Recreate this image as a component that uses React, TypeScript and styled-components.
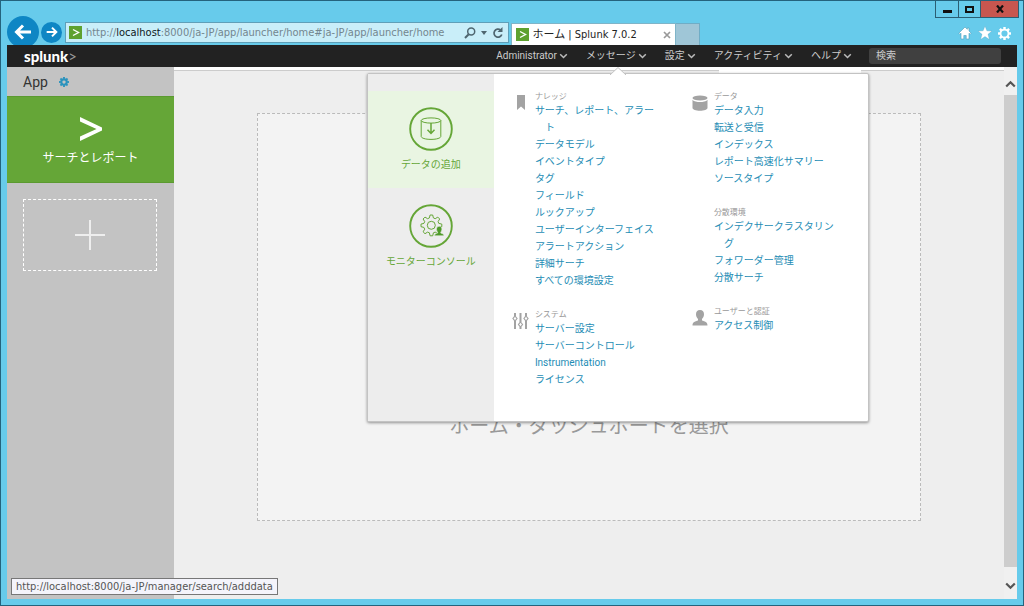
import React from "react";
import styled, { createGlobalStyle, css } from "styled-components";

const jp = `Roboto, "Noto Sans CJK JP", sans-serif`;
const ui = `"DejaVu Sans Condensed", "Noto Sans CJK JP", sans-serif`;

const Global = createGlobalStyle`
  * { box-sizing: border-box; }
  body { margin: 0; background: #67cbeb; font-family: ${jp}; font-size: 10px; }
  button { border: 0; padding: 0; margin: 0; background: none; font: inherit; color: inherit; cursor: pointer; }
  a { text-decoration: none; color: inherit; }
  ul, h2, h3, p { margin: 0; padding: 0; list-style: none; font-weight: 400; font-size: inherit; }
  svg { display: block; flex: none; }
`;

/* ---------- browser window ---------- */

const Window = styled.div`
  position: relative;
  display: flex;
  flex-direction: column;
  min-height: 100vh;
  padding: 0 6px 6px;
  border: 1px solid #24637d;
  background: #67cbeb;
`;

const Chrome = styled.header`
  display: flex;
  align-items: flex-end;
  height: 44px;
  font-family: ${ui};
`;

const HistoryButtons = styled.div`
  display: flex;
  align-items: center;
  gap: 2px;
  width: 58px;
  height: 26px;
`;

const RoundButton = styled.button<{ $size: number }>`
  display: grid;
  place-items: center;
  width: ${(p) => p.$size}px;
  height: ${(p) => p.$size}px;
  border-radius: 50%;
  background: #0e86c4;
  flex: none;
`;

const AddressBar = styled.form`
  display: flex;
  align-items: center;
  flex: 1 1 444px;
  min-width: 0;
  height: 21px;
  margin-bottom: 2px;
  padding: 0 4px 0 3px;
  gap: 4px;
  border: 1px solid #5f9fb8;
  background: #c9eef9;
`;

const Url = styled.div`
  flex: 1;
  min-width: 0;
  overflow: hidden;
  white-space: nowrap;
  font-size: 11px;
  line-height: 16px;
  color: #74868f;
  b { font-weight: 400; color: #10181c; }
`;

const BarTools = styled.div`
  display: flex;
  align-items: center;
  gap: 5px;
  color: #4f6670;
`;

const Tab = styled.div`
  display: flex;
  align-items: center;
  gap: 4px;
  width: 166px;
  height: 22px;
  margin-left: 2px;
  padding: 0 4px;
  border: 1px solid #7fb4c8;
  border-bottom: 0;
  background: #fff;
  color: #222;
  font-size: 11px;
  line-height: 16px;
  span { flex: 1; white-space: nowrap; }
`;

const NewTab = styled.button`
  width: 24px;
  height: 22px;
  border: 1px solid #6fadc6;
  border-left: 0;
  border-bottom: 0;
  background: #9fc6d7;
`;

const ChromeRight = styled.div`
  display: flex;
  flex-direction: column;
  align-items: flex-end;
  justify-content: space-between;
  flex: 1 1 317px;
  height: 44px;
`;

const WindowButtons = styled.div`
  display: flex;
  height: 17px;
  margin-right: -2px;
  border: 1px solid #2b5e73;
  border-top: 0;
`;

const WindowButton = styled.button<{ $close?: boolean }>`
  display: grid;
  place-items: center;
  width: ${(p) => (p.$close ? 38 : 22)}px;
  background: ${(p) => (p.$close ? "#c7564f" : "transparent")};
  & + & { border-left: 1px solid #2b5e73; }
`;

const Shortcuts = styled.div`
  display: flex;
  gap: 6px;
  padding: 0 6px 5px;
`;

/* ---------- product bar ---------- */

const Bar = styled.nav`
  display: flex;
  align-items: center;
  height: 22px;
  padding: 0 16px 0 17px;
  background: #222;
  color: #ccc;
  line-height: 16px;
`;

const Logo = styled.a`
  margin-right: auto;
  font-family: Lato, sans-serif;
  font-size: 15px;
  font-weight: 900;
  line-height: 20px;
  color: #fff;
  span { color: #999; font-weight: 400; }
`;

const BarItems = styled.ul`
  display: flex;
  gap: 18px;
  margin-right: 17px;
`;

const BarItem = styled.li`
  position: relative;
`;

const BarButton = styled.button`
  display: flex;
  align-items: center;
  gap: 2px;
  white-space: nowrap;
  line-height: 20px;
`;

const Search = styled.input`
  width: 132px;
  height: 16px;
  padding: 0 7px;
  border: 0;
  border-radius: 3px;
  background: #404040;
  color: #ccc;
  font: 10px/16px ${jp};
  &::placeholder { color: #ccc; opacity: 1; }
`;

/* ---------- settings menu ---------- */

const Menu = styled.div`
  position: absolute;
  z-index: 2;
  top: 27px;
  left: -219px;
  display: flex;
  width: 502px;
  min-height: 349px;
  border: 1px solid #c3c3c3;
  border-radius: 2px;
  background: #fff;
  box-shadow: 0 1px 3px rgba(0, 0, 0, 0.4);
`;

const Caret = styled.svg`
  position: absolute;
  top: -7px;
  left: 242px;
`;

const Featured = styled.div`
  width: 126px;
  padding-top: 17px;
  background: #ededed;
`;

const FeaturedLink = styled.a<{ $active?: boolean }>`
  display: flex;
  flex-direction: column;
  align-items: center;
  gap: 6px;
  padding: 16px 0 15px;
  color: #65a637;
  line-height: 16px;
  ${(p) => p.$active && css`background: #e9f5e2;`}
`;

const Columns = styled.div`
  display: flex;
  gap: 28px;
  padding: 15px 0 24px 18px;
`;

const Column = styled.div`
  display: flex;
  flex-direction: column;
  gap: 18px;
  width: 151px;
`;

const Group = styled.section`
  display: grid;
  grid-template-columns: 18px 1fr;
  column-gap: 5px;
  h3 {
    grid-column: 2;
    font-size: 8px;
    line-height: 16px;
    color: #999;
    margin-bottom: -3px;
  }
`;

const GroupIcon = styled.span`
  grid-column: 1;
  grid-row: 1 / 3;
  padding-top: 6px;
  color: #a3a3a3;
  display: flex;
  justify-content: center;
  align-items: flex-start;
`;

const Links = styled.ul`
  grid-column: 2;
  color: #1e8db5;
  line-height: 17px;
`;

const LinkRow = styled.li`
  padding-left: 10px;
  text-indent: -10px;
`;

/* ---------- page ---------- */

const Page = styled.div`
  display: flex;
  flex: 1;
  background: #fff;
`;

const Sidebar = styled.aside`
  width: 167px;
  background: #c3c3c3;
`;

const AppHeader = styled.div`
  display: flex;
  align-items: center;
  gap: 11px;
  height: 29px;
  padding-left: 16px;
  color: #333;
  h2 { font-size: 14px; line-height: 20px; }
`;

const AppTile = styled.a`
  display: flex;
  flex-direction: column;
  align-items: center;
  gap: 7px;
  height: 87px;
  padding-top: 20px;
  border-top: 1px solid #5b9a30;
  border-bottom: 1px solid #5b9a30;
  background: #65a637;
  color: #fff;
  font-size: 12px;
  line-height: 20px;
`;

const AddApp = styled.button`
  display: grid;
  place-items: center;
  width: 134px;
  height: 72px;
  margin: 16px 16px 0;
  border: 1px dashed #fff;
`;

const Main = styled.main`
  display: flex;
  flex-direction: column;
  flex: 1;
  padding-top: 3px;
  background: #fff;
`;

const TopEdge = styled.div`
  display: flex;
  height: 4px;
`;

const EdgeLine = styled.div<{ $grow: number }>`
  flex: ${(p) => p.$grow};
  border-top: 1px solid #ccc;
  background: #eee;
`;

const EdgeTab = styled.div`
  width: 142px;
`;

const Content = styled.div`
  flex: 1;
  padding: 39px 10% 78px;
  background: #eee;
`;

const Dashboard = styled.section`
  display: flex;
  flex-direction: column;
  justify-content: flex-end;
  align-items: center;
  min-height: 408px;
  padding-bottom: 79px;
  border: 1px dashed #bbb;
  background: #f3f3f3;
  color: #999;
  p { font-size: 20px; line-height: 30px; }
`;

const Scrollbar = styled.div`
  display: flex;
  flex-direction: column;
  width: 13px;
  background: #f0f0f0;
`;

const ScrollButton = styled.button<{ $h: number }>`
  display: grid;
  justify-items: center;
  align-items: center;
  height: ${(p) => p.$h}px;
  padding-top: 6px;
`;

const Thumb = styled.div`
  flex: 1;
  background: #cdcdcd;
`;

const StatusTip = styled.div`
  position: absolute;
  z-index: 3;
  left: 10px;
  bottom: 10px;
  padding: 0 4px;
  border: 1px solid #777;
  background: #f4f4fb;
  color: #555;
  font: 11px/15px ${ui};
`;

/* ---------- icons ---------- */

const SiteIcon = () => (
  <svg width="13" height="13" viewBox="0 0 13 13">
    <rect width="13" height="13" fill="#5ea12f" />
    <path d="M4 3.5 9.5 6.5 4 9.5" fill="none" stroke="#fff" strokeWidth="1.4" />
  </svg>
);

const Arrow = ({ size, flip }: { size: number; flip?: boolean }) => (
  <svg width={size} height={size} viewBox="0 0 18 18">
    <path
      d={flip ? "M1 9h14M9 2.5 15.5 9 9 15.5" : "M17 9H3M9 2.5 2.5 9 9 15.5"}
      fill="none"
      stroke="#fff"
      strokeWidth="3"
    />
  </svg>
);

const Chevron = () => (
  <svg width="9" height="6" viewBox="0 0 9 6">
    <path d="M1.2 1.2 4.5 4.5 7.8 1.2" fill="none" stroke="#bbb" strokeWidth="1.5" />
  </svg>
);

const teeth = [0, 45, 90, 135, 180, 225, 270, 315];

const Gear = ({ size, color, hole }: { size: number; color: string; hole: number }) => (
  <svg width={size} height={size} viewBox="-8 -8 16 16">
    <circle r={(6 + hole) / 2} fill="none" stroke={color} strokeWidth={6 - hole} />
    {teeth.map((a) => (
      <rect key={a} x="-1.5" y="-8" width="3" height="3" fill={color} transform={`rotate(${a})`} />
    ))}
  </svg>
);

const gearOutline =
  "M20.4 13.9l.7-2.9h2.6l.7 2.9 1.8.8 2.6-1.6 1.9 1.9-1.6 2.6.7 1.8 3 .7v2.6l-3 .7-.7 1.8 1.6 2.6-1.9 1.9-2.6-1.6-1.8.7-.7 3h-2.6l-.7-3-1.8-.7-2.6 1.6-1.9-1.9 1.6-2.6-.8-1.8-2.9-.7v-2.6l2.9-.7.8-1.8-1.6-2.6 1.9-1.9 2.6 1.6z";

const AddDataIcon = () => (
  <svg width="44" height="44" viewBox="0 0 44 44" fill="none" stroke="#65a637">
    <circle cx="22" cy="22" r="20.8" strokeWidth="1.9" />
    <ellipse cx="22" cy="13.5" rx="9.8" ry="2.6" />
    <path d="M12.2 13.5V29.500c0 1.500 4 2.900 9.800 2.900s9.800-1.400 9.800-2.900V13.500" />
    <path d="M22 16v10M18.500 22.800 22 26.400l3.500-3.600" strokeWidth="1.500" />
  </svg>
);

const MonitorIcon = () => (
  <svg width="44" height="44" viewBox="0 0 44 44" fill="none" stroke="#65a637">
    <circle cx="22" cy="22" r="20.8" strokeWidth="1.9" />
    <path d={gearOutline} strokeLinejoin="round" />
    <circle cx="22.300" cy="21.300" r="4" />
    <path
      d="M30.200 22.300c1.900 0 2.700 1.300 2.700 2.900 0 1.500-.6 2.300-1.100 3v.9c1.700.5 3.200 1 3.200 2.700H25.400c0-1.700 1.500-2.200 3.200-2.700v-.9c-.5-.7-1.100-1.500-1.100-3 0-1.600.8-2.900 2.700-2.900z"
      fill="#4f9a2a"
      stroke="#e9efe5"
      strokeWidth=".6"
    />
  </svg>
);

const Bookmark = () => (
  <svg width="8" height="15" viewBox="0 0 8 15">
    <path d="M0 0h8v15L4 11.500 0 15z" fill="currentColor" />
  </svg>
);

const Cylinder = () => (
  <svg width="16" height="16" viewBox="0 0 16 16" fill="currentColor">
    <ellipse cx="8" cy="3" rx="7.500" ry="2.600" />
    <path d="M.5 4.800C2 6.800 5 7 8 7s6-.2 7.500-2.200V13c0 1.600-3.400 2.800-7.500 2.800S.5 14.600.5 13z" />
  </svg>
);

const Sliders = () => (
  <svg width="17" height="17" viewBox="0 0 17 17" fill="none" stroke="currentColor" strokeWidth="2">
    <path d="M3 0v3M3 8v8M8.500 0v9M8.500 14v2M14 0v3M14 8v8" />
    <path d="M3 3 5 5.500 3 8 1 5.500zM8.500 9l2 2.500-2 2.500-2-2.500zM14 3l2 2.500L14 8l-2-2.500z" strokeWidth="1.200" />
  </svg>
);

const Person = () => (
  <svg width="16" height="16" viewBox="0 0 16 16" fill="currentColor">
    <path d="M8 0c2.800 0 4 1.900 4 4.300 0 2-.9 3.600-2 4.600v1.600c2.700.9 5.500 1.500 5.500 4.900H.5c0-3.400 2.800-4 5.500-4.900V8.900c-1.100-1-2-2.600-2-4.600C4 1.900 5.200 0 8 0z" />
  </svg>
);

const ScrollArrow = ({ down }: { down?: boolean }) => (
  <svg width="11" height="8" viewBox="0 0 11 8">
    <path d={down ? "M1.200 1.500 5.500 5.800 9.800 1.500" : "M1.200 6.500 5.500 2.200 9.800 6.500"} fill="none" stroke="#555" strokeWidth="2.200" />
  </svg>
);

/* ---------- data ---------- */

type GroupData = { title: string; icon?: React.ReactNode; links: string[] };

const leftGroups: GroupData[] = [
  {
    title: "ナレッジ",
    icon: <Bookmark />,
    links: [
      "サーチ、レポート、アラート",
      "データモデル",
      "イベントタイプ",
      "タグ",
      "フィールド",
      "ルックアップ",
      "ユーザーインターフェイス",
      "アラートアクション",
      "詳細サーチ",
      "すべての環境設定",
    ],
  },
  {
    title: "システム",
    icon: <Sliders />,
    links: ["サーバー設定", "サーバーコントロール", "Instrumentation", "ライセンス"],
  },
];

const rightGroups: GroupData[] = [
  {
    title: "データ",
    icon: <Cylinder />,
    links: ["データ入力", "転送と受信", "インデックス", "レポート高速化サマリー", "ソースタイプ"],
  },
  { title: "分散環境", links: ["インデクサークラスタリング", "フォワーダー管理", "分散サーチ"] },
  { title: "ユーザーと認証", icon: <Person />, links: ["アクセス制御"] },
];

const MenuColumn = ({ groups }: { groups: GroupData[] }) => (
  <Column>
    {groups.map((g) => (
      <Group key={g.title}>
        <GroupIcon>{g.icon}</GroupIcon>
        <h3>{g.title}</h3>
        <Links>
          {g.links.map((l) => (
            <LinkRow key={l}>
              <a href="#">{l}</a>
            </LinkRow>
          ))}
        </Links>
      </Group>
    ))}
  </Column>
);

const SettingsMenu = () => (
  <Menu>
    <Caret width="16" height="8" viewBox="0 0 16 8">
      <path d="M0 8 8 .5 16 8" fill="#fff" stroke="#c3c3c3" />
    </Caret>
    <Featured>
      <FeaturedLink href="#" $active>
        <AddDataIcon />
        データの追加
      </FeaturedLink>
      <FeaturedLink href="#">
        <MonitorIcon />
        モニターコンソール
      </FeaturedLink>
    </Featured>
    <Columns>
      <MenuColumn groups={leftGroups} />
      <MenuColumn groups={rightGroups} />
    </Columns>
  </Menu>
);

const barLabels = ["Administrator", "メッセージ", "設定", "アクティビティ", "ヘルプ"];

export default function App() {
  return (
    <>
      <Global />
      <Window>
        <Chrome>
          <HistoryButtons>
            <RoundButton $size={32} aria-label="戻る"><Arrow size={18} /></RoundButton>
            <RoundButton $size={21} aria-label="進む"><Arrow size={12} flip /></RoundButton>
          </HistoryButtons>
          <AddressBar>
            <SiteIcon />
            <Url>
              http://<b>localhost</b>:8000/ja-JP/app/launcher/home#ja-JP/app/launcher/home
            </Url>
            <BarTools>
              <svg width="12" height="12" viewBox="0 0 12 12" fill="none" stroke="currentColor" strokeWidth="1.500">
                <circle cx="7.200" cy="4.600" r="3.500" />
                <path d="M4.700 7.200 1 11" strokeWidth="2" />
              </svg>
              <svg width="6" height="4" viewBox="0 0 6 4"><path d="M0 0h6L3 4z" fill="currentColor" /></svg>
              <svg width="12" height="12" viewBox="0 0 12 12" fill="none" stroke="currentColor" strokeWidth="1.700">
                <path d="M9.800 7.500A4 4 0 1 1 8.500 3" />
                <path d="M10.500 0v5h-5z" fill="currentColor" stroke="none" />
              </svg>
            </BarTools>
          </AddressBar>
          <Tab>
            <SiteIcon />
            <span>ホーム | Splunk 7.0.2</span>
            <button aria-label="タブを閉じる">
              <svg width="8" height="8" viewBox="0 0 8 8"><path d="M1 1l6 6M7 1 1 7" stroke="#999" strokeWidth="1.700" /></svg>
            </button>
          </Tab>
          <NewTab aria-label="新しいタブ" />
          <ChromeRight>
            <WindowButtons>
              <WindowButton aria-label="最小化">
                <svg width="9" height="9" viewBox="0 0 9 9"><path d="M0 5h9v3H0z" fill="#111" /></svg>
              </WindowButton>
              <WindowButton aria-label="最大化">
                <svg width="9" height="7" viewBox="0 0 9 7"><rect x="1" y="1" width="7" height="5" fill="none" stroke="#111" strokeWidth="2" /></svg>
              </WindowButton>
              <WindowButton $close aria-label="閉じる">
                <svg width="8" height="8" viewBox="0 0 8 8"><path d="M1 .5l6 7M7 .5l-6 7" stroke="#111" strokeWidth="2.200" /></svg>
              </WindowButton>
            </WindowButtons>
            <Shortcuts>
              <button aria-label="ホーム">
                <svg width="14" height="14" viewBox="0 0 14 14" fill="#fff" stroke="#4f9dbb" strokeWidth=".6">
                  <path d="M7 1 .8 7.200l1 1L3 7.200V13h2.800V9.500h2.400V13H11V7.200l1.200 1 1-1L11 5V2H9.300v1.300z" />
                </svg>
              </button>
              <button aria-label="お気に入り">
                <svg width="14" height="14" viewBox="0 0 14 14" fill="#fff" stroke="#4f9dbb" strokeWidth=".3">
                  <path d="M7 0l1.900 4.800 5.100.3-4 3.200 1.400 5.200L7 10.600l-4.400 2.900L4 8.300 0 5.100l5.100-.3z" />
                </svg>
              </button>
              <button aria-label="ツール"><Gear size={13} color="#fff" hole={3.8} /></button>
            </Shortcuts>
          </ChromeRight>
        </Chrome>

        <Bar>
          <Logo href="#">splunk<span>&gt;</span></Logo>
          <BarItems>
            {barLabels.map((label, i) => (
              <BarItem key={label}>
                <BarButton>
                  {label}
                  <Chevron />
                </BarButton>
                {i === 1 && <SettingsMenu />}
              </BarItem>
            ))}
          </BarItems>
          <Search type="search" placeholder="検索" aria-label="検索" />
        </Bar>

        <Page>
          <Sidebar>
            <AppHeader>
              <h2>App</h2>
              <button aria-label="App の管理"><Gear size={10} color="#2b93bd" hole={2.6} /></button>
            </AppHeader>
            <AppTile href="#">
              <svg width="24" height="24" viewBox="0 0 24 24">
                <path d="M1 0 23 10.500v3L1 24v-4.500L17.500 12 1 4.500z" fill="#fff" />
              </svg>
              サーチとレポート
            </AppTile>
            <AddApp aria-label="App の追加">
              <svg width="30" height="30" viewBox="0 0 30 30"><path d="M15 0v30M0 15h30" stroke="#eee" strokeWidth="2" /></svg>
            </AddApp>
          </Sidebar>
          <Main>
            <TopEdge>
              <EdgeLine $grow={546} />
              <EdgeTab />
              <EdgeLine $grow={143} />
            </TopEdge>
            <Content>
              <Dashboard>
                <p>ホーム・ダッシュボードを選択</p>
              </Dashboard>
            </Content>
          </Main>
          <Scrollbar>
            <ScrollButton $h={28} aria-label="上へスクロール"><ScrollArrow /></ScrollButton>
            <Thumb />
            <ScrollButton $h={32} aria-label="下へスクロール"><ScrollArrow down /></ScrollButton>
          </Scrollbar>
        </Page>

        <StatusTip>http://localhost:8000/ja-JP/manager/search/adddata</StatusTip>
      </Window>
    </>
  );
}
